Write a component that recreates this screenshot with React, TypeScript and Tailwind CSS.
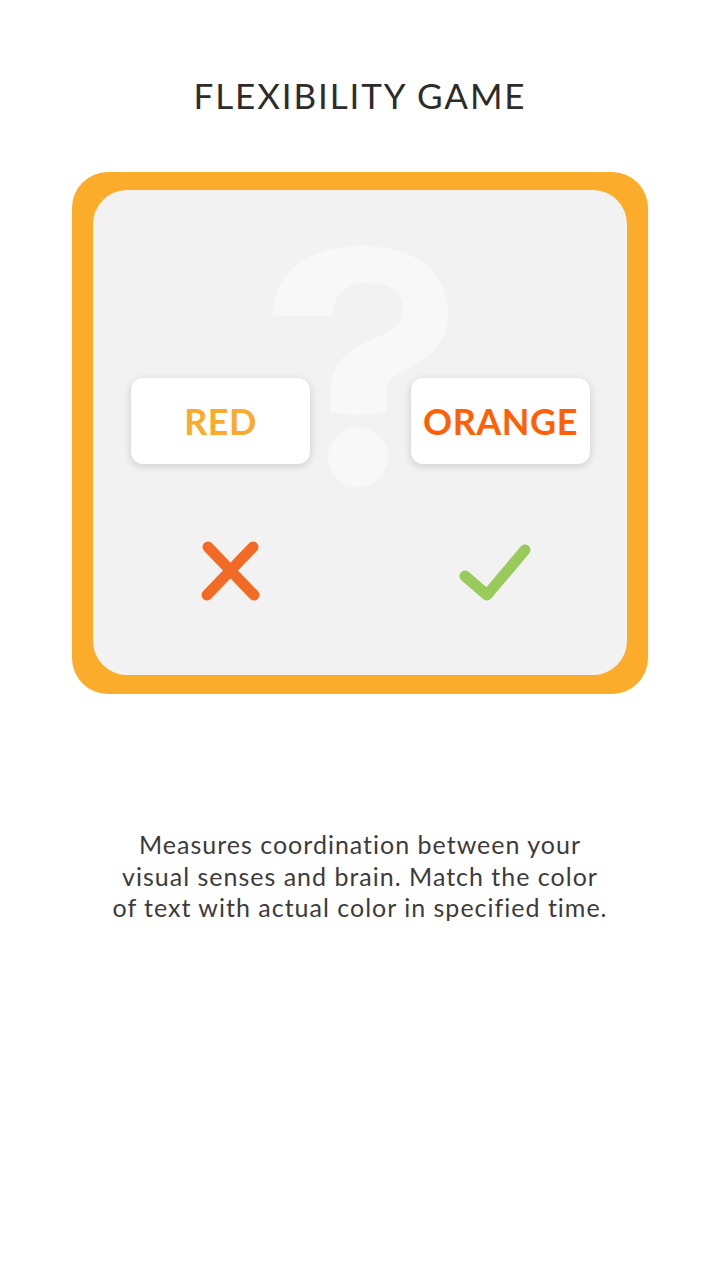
const FONT = { fontFamily: "Lato, 'Open Sans', sans-serif" };

function QuestionMark() {
  // big faint "?" behind the cards; coordinates are in page space of the inner panel
  return (
    <svg
      className="pointer-events-none absolute left-0 top-0"
      width="530"
      height="485"
      viewBox="93 190 530 485"
    >
      <path
        fill="#f8f8f8"
        d="M 273 316 C 273 270 310 246 362 246 C 415 246 448 272 448 313 C 448 342 430 358 405 370 C 390 377 386 384 386 395 L 386 412 Q 358 418 330 412 L 330 395 C 330 365 345 350 375 338 C 395 330 403 322 403 308 C 403 292 390 283 368 283 C 345 283 333 293 333 316 Z"
      />
      <circle cx="358" cy="457" r="30" fill="#f8f8f8" />
    </svg>
  );
}

function WordCard({ word, color }: { word: string; color: string }) {
  return (
    <div className="flex h-[86px] w-[179px] items-center justify-center rounded-[12px] bg-white shadow-[0_2px_8px_rgba(0,0,0,0.16)]">
      <span className={`text-[36px] font-bold leading-none tracking-[0.5px] ${color}`} style={FONT}>
        {word}
      </span>
    </div>
  );
}

export default function App() {
  return (
    <div className="flex min-h-[1280px] w-[720px] flex-col items-center bg-white" style={FONT}>
      <h1 className="mt-[78px] text-[35px] font-normal leading-none tracking-[1.9px] text-[#2e2b2b]">
        FLEXIBILITY GAME
      </h1>

      {/* game preview */}
      <div className="mt-[59px] rounded-[36px] bg-[#fbac2a] pb-[19px] pl-[21px] pr-[21px] pt-[18px]">
        <div className="relative h-[485px] w-[534px] overflow-hidden rounded-[34px] bg-[#f2f2f2]">
          <QuestionMark />
          <div className="relative flex flex-col pt-[188px]">
            <div className="flex gap-[101px] pl-[38px]">
              <WordCard word="RED" color="text-[#fbab2b]" />
              <WordCard word="ORANGE" color="text-[#ff5f05]" />
            </div>
            <div className="mt-[74px] flex">
              <svg className="ml-[105px]" width="66" height="66" viewBox="0 0 66 66">
                <path
                  d="M 10 9 L 56 57 M 55 9 L 9 57"
                  stroke="#f26b24"
                  strokeWidth="11"
                  strokeLinecap="round"
                  fill="none"
                />
              </svg>
              <svg className="ml-[193px]" width="80" height="66" viewBox="0 0 80 66">
                <path
                  d="M 8 38 L 30 57 L 68 12"
                  stroke="#98cb5c"
                  strokeWidth="11"
                  strokeLinecap="round"
                  strokeLinejoin="round"
                  fill="none"
                />
              </svg>
            </div>
          </div>
        </div>
      </div>

      <p className="mt-[135px] text-center text-[25px] leading-[31.5px] tracking-[1px] text-[#3d3b3b]">
        Measures coordination between your
        <br />
        visual senses and brain. Match the color
        <br />
        of text with actual color in specified time.
      </p>
    </div>
  );
}
